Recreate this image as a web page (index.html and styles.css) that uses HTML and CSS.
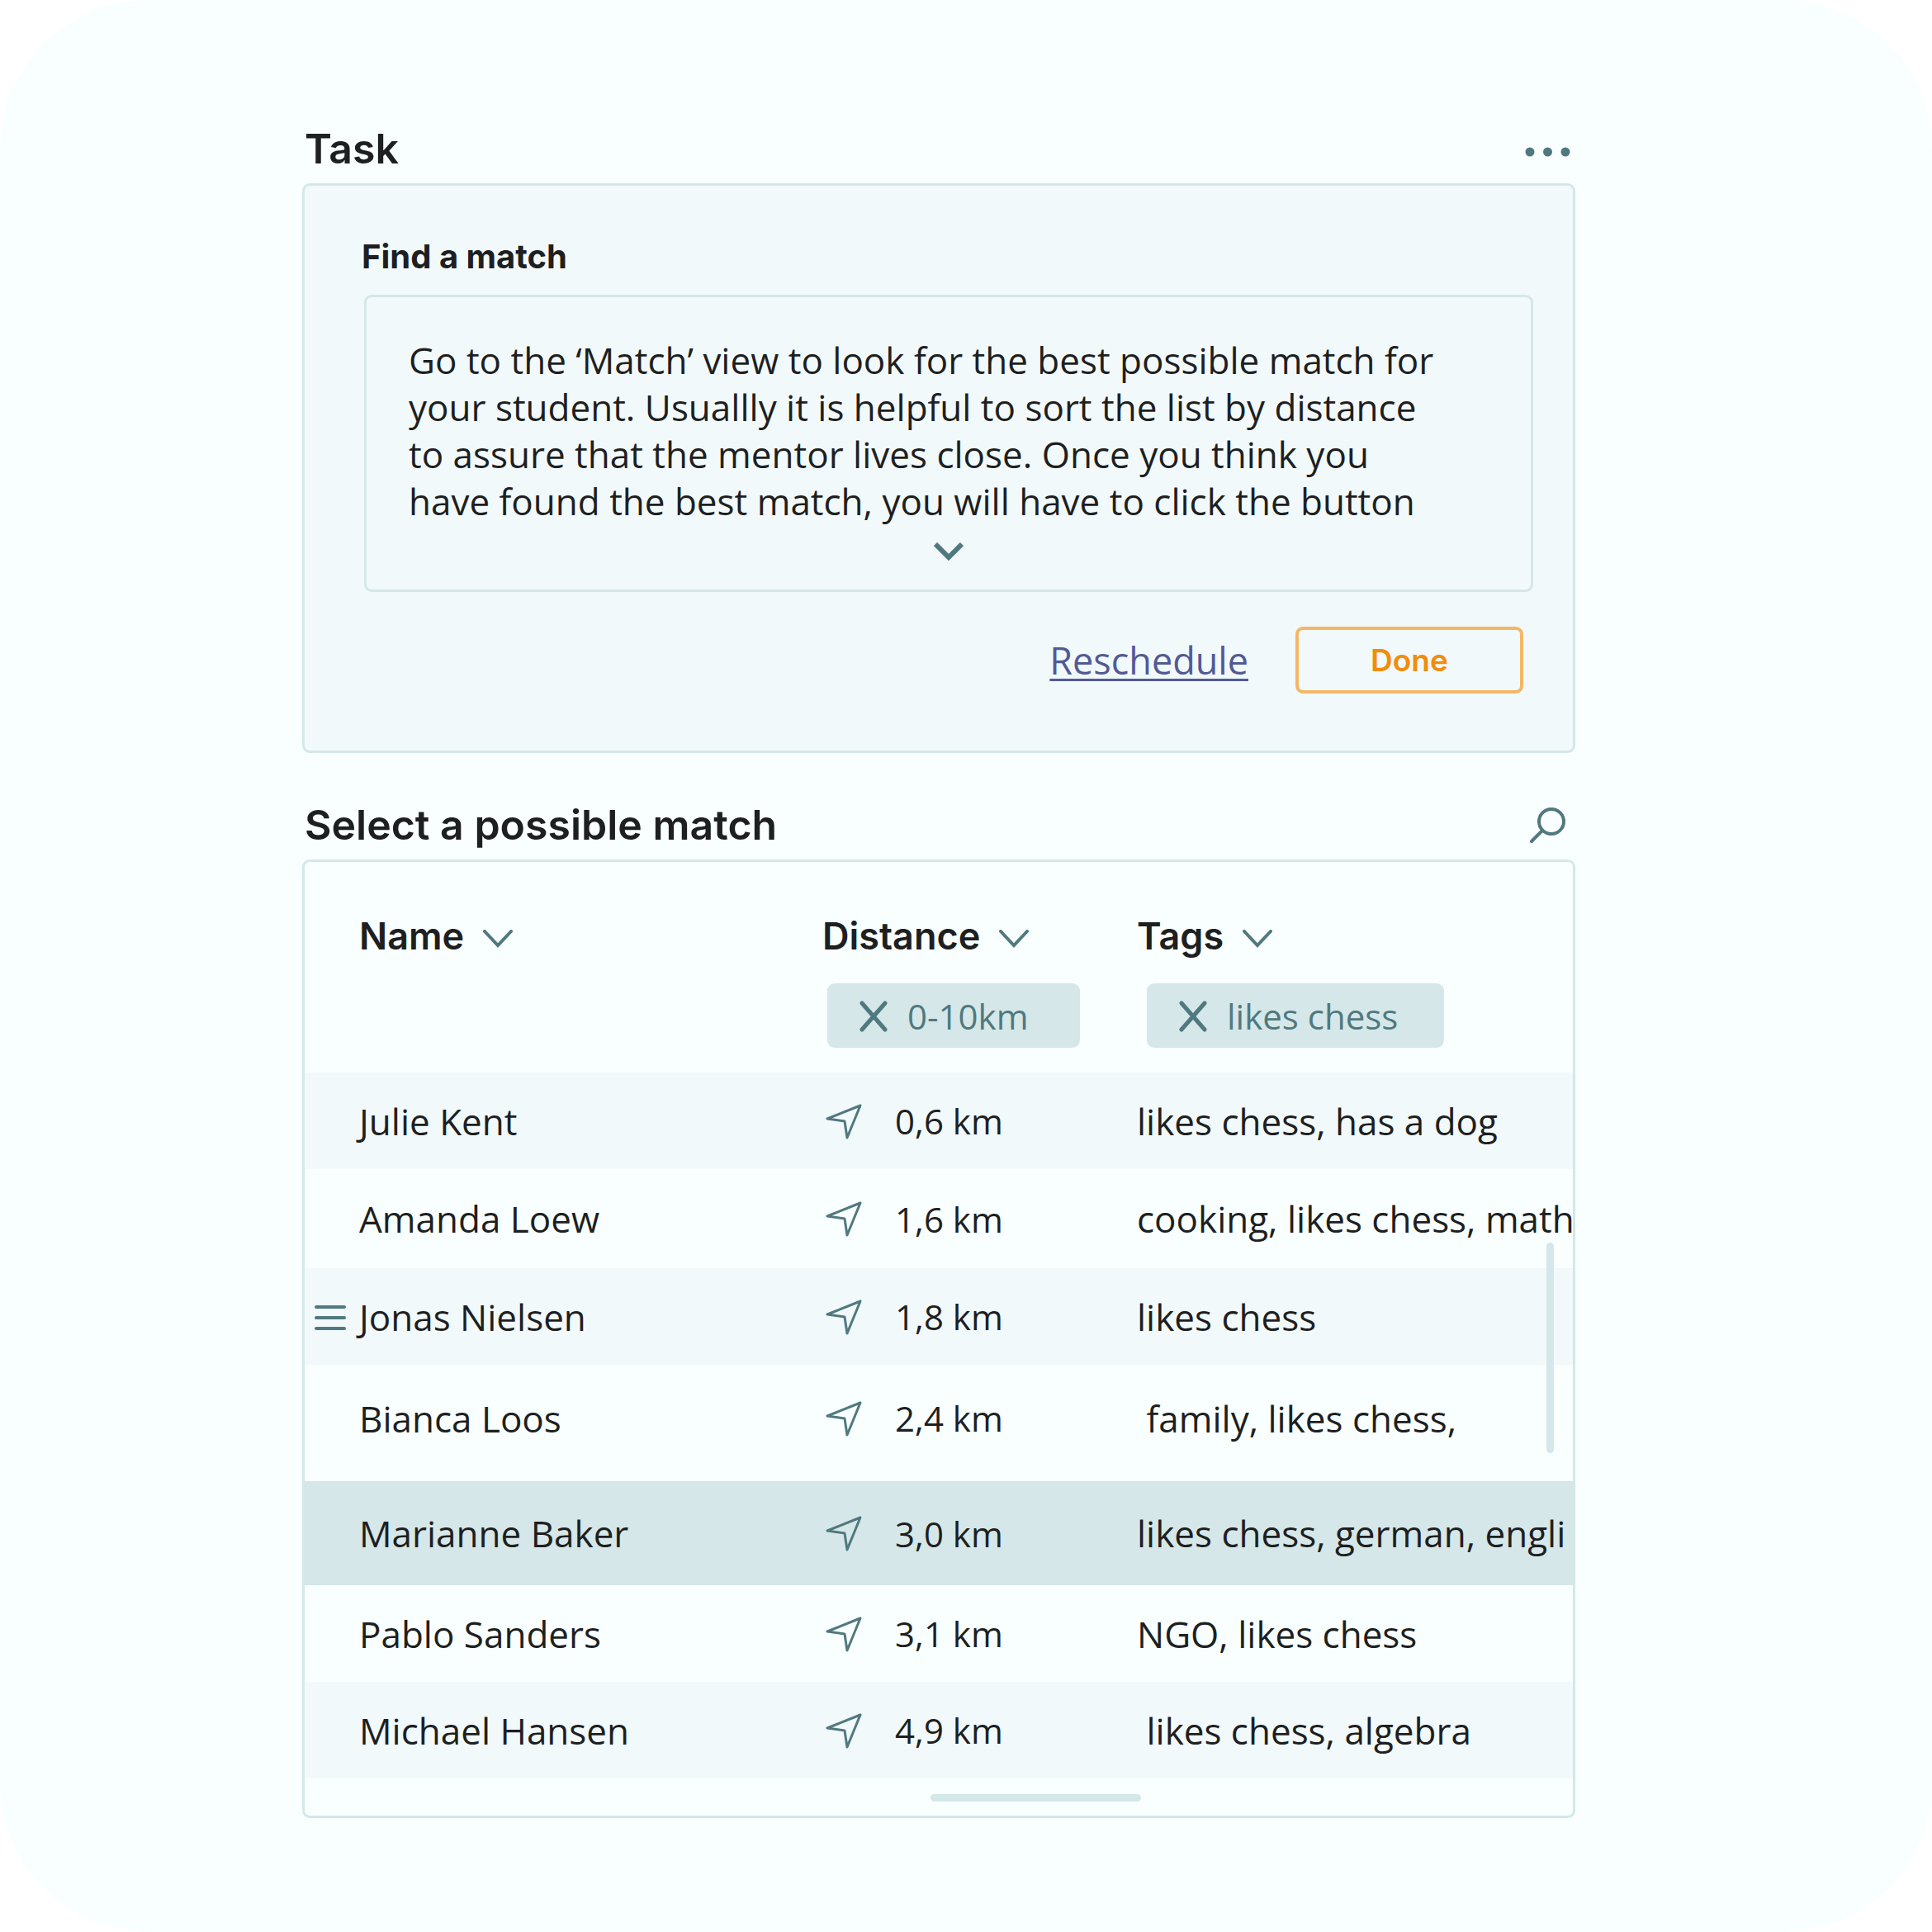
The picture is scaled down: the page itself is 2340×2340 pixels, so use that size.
FILE: index.html
```html
<!DOCTYPE html>
<html lang="en">
<head>
    <meta charset="UTF-8">
    <meta name="viewport" content="width=device-width, initial-scale=1.0">
    <title>Find a match</title>
    <link rel="stylesheet" href="styles.css">
</head>
<body>

<!-- shared icons -->
<svg class="sprite" aria-hidden="true">
    <symbol id="chevron" viewBox="0 0 36 22">
        <path d="M2 2 L18 19 L34 2" fill="none" stroke="currentColor" stroke-width="4" stroke-linecap="round"/>
    </symbol>
    <symbol id="cross" viewBox="0 0 34 40">
        <path d="M3 5 L31 37 M31 5 L3 37" fill="none" stroke="currentColor" stroke-width="5" stroke-linecap="round"/>
    </symbol>
    <symbol id="arrow" viewBox="0 0 44 44">
        <path d="M42 3 L2 19 L23 22 L26 42 Z" fill="none" stroke="currentColor" stroke-width="3" stroke-linejoin="round"/>
    </symbol>
</svg>

<main class="page">
    <section class="task">
        <div class="section-head">
            <h2>Task</h2>
            <button class="icon-btn" aria-label="More options">
                <svg width="56" height="20" viewBox="0 0 56 20" fill="currentColor">
                    <circle cx="7" cy="14" r="5.5"/>
                    <circle cx="28.500" cy="14" r="5.5"/>
                    <circle cx="50" cy="14" r="5.5"/>
                </svg>
            </button>
        </div>

        <div class="panel task-panel">
            <h3>Find a match</h3>
            <div class="description">
                <p>Go to the ‘Match’ view to look for the best possible match for<br>
                your student. Usuallly it is helpful to sort the list by distance<br>
                to assure that the mentor lives close. Once you think you<br>
                have found the best match, you will have to click the button</p>
                <button class="icon-btn expand" aria-label="Show more">
                    <svg width="36" height="22" viewBox="0 0 36 22">
                        <path d="M2 2 L18 18 L34 2" fill="none" stroke="currentColor" stroke-width="6"/>
                    </svg>
                </button>
            </div>
            <div class="actions">
                <a href="#">Reschedule</a>
                <button class="done-btn">Done</button>
            </div>
        </div>
    </section>

    <section class="matches">
        <div class="section-head">
            <h2>Select a possible match</h2>
            <button class="icon-btn" aria-label="Search">
                <svg width="50" height="46" viewBox="0 0 50 46" fill="none" stroke="currentColor" stroke-width="4" stroke-linecap="round">
                    <circle cx="27" cy="19" r="15"/>
                    <path d="M16 30 L3 43"/>
                </svg>
            </button>
        </div>

        <div class="panel match-panel">
            <table>
                <colgroup>
                    <col class="col-name">
                    <col class="col-distance">
                    <col>
                </colgroup>
                <thead>
                <tr>
                    <th>
                        <button class="sort-btn">Name <svg width="36" height="22"><use href="#chevron"/></svg></button>
                    </th>
                    <th>
                        <button class="sort-btn">Distance <svg width="36" height="22"><use href="#chevron"/></svg></button>
                        <button class="chip"><svg width="34" height="40"><use href="#cross"/></svg>0-10km</button>
                    </th>
                    <th>
                        <button class="sort-btn">Tags <svg width="36" height="22"><use href="#chevron"/></svg></button>
                        <button class="chip chip-tags"><svg width="34" height="40"><use href="#cross"/></svg>likes chess</button>
                    </th>
                </tr>
                </thead>
                <tbody>
                <tr class="shaded">
                    <td>Julie Kent</td>
                    <td><span class="distance"><svg width="44" height="44"><use href="#arrow"/></svg>0,6 km</span></td>
                    <td>likes chess, has a dog</td>
                </tr>
                <tr class="tall">
                    <td>Amanda Loew</td>
                    <td><span class="distance"><svg width="44" height="44"><use href="#arrow"/></svg>1,6 km</span></td>
                    <td>cooking, likes chess, math</td>
                </tr>
                <tr class="shaded">
                    <td>
                        <button class="icon-btn drag" aria-label="Row menu">
                            <svg width="38" height="30" viewBox="0 0 38 30" stroke="currentColor" stroke-width="4" stroke-linecap="round">
                                <path d="M2 2 H36 M2 15 H36 M2 28 H36"/>
                            </svg>
                        </button>
                        Jonas Nielsen
                    </td>
                    <td><span class="distance"><svg width="44" height="44"><use href="#arrow"/></svg>1,8 km</span></td>
                    <td>likes chess</td>
                </tr>
                <tr class="spaced">
                    <td>Bianca Loos</td>
                    <td><span class="distance"><svg width="44" height="44"><use href="#arrow"/></svg>2,4 km</span></td>
                    <td>&nbsp;family, likes chess,</td>
                </tr>
                <tr class="selected">
                    <td>Marianne Baker</td>
                    <td><span class="distance"><svg width="44" height="44"><use href="#arrow"/></svg>3,0 km</span></td>
                    <td>likes chess, german, engli</td>
                </tr>
                <tr>
                    <td>Pablo Sanders</td>
                    <td><span class="distance"><svg width="44" height="44"><use href="#arrow"/></svg>3,1 km</span></td>
                    <td>NGO, likes chess</td>
                </tr>
                <tr class="shaded">
                    <td>Michael Hansen</td>
                    <td><span class="distance"><svg width="44" height="44"><use href="#arrow"/></svg>4,9 km</span></td>
                    <td>&nbsp;likes chess, algebra</td>
                </tr>
                </tbody>
            </table>
            <div class="thumb thumb-y"></div>
            <div class="thumb thumb-x"></div>
        </div>
    </section>
</main>

</body>
</html>
```
FILE: styles.css
```css
* {
    box-sizing: border-box;
}
body {
    margin: 0;
    background-color: #fff;
    color: #1e1f21;
    font-family: "Open Sans", sans-serif;
    font-size: 44px;
}
h2, h3, p {
    margin: 0;
}
h2, h3, .sort-btn, .done-btn {
    font-family: Inter, sans-serif;
}
button {
    padding: 0;
    background: none;
    border: none;
    color: inherit;
    font: inherit;
    cursor: pointer;
}
svg {
    display: block;
    flex: none;
}
.sprite {
    position: absolute;
    width: 0;
    height: 0;
}
.page {
    min-height: 100vh;
    padding: 144px 432px 138px 366px;
    background-color: #f9ffff;
    border-radius: 180px;
}
.section-head {
    display: flex;
    justify-content: space-between;
    align-items: center;
    height: 78px;
    padding: 0 6px 6px 3px;
}
h2 {
    font-size: 50px;
    font-weight: 600;
    line-height: 60px;
}
.icon-btn {
    color: #50797f;
}
.panel {
    border: 3px solid #d5e7e8;
    border-radius: 9px;
}

/* task */
.task-panel {
    padding: 59px 48px 69px 72px;
    background-color: #f2f9fb;
}
h3 {
    margin-left: -3px;
    font-size: 40px;
    font-weight: 700;
    line-height: 54px;
}
.description {
    margin-top: 19px;
    padding: 48px 51px 35px;
    border: 3px solid #d5e7e8;
    border-radius: 9px;
}
.description p {
    line-height: 57px;
    white-space: nowrap;
}
.expand {
    display: block;
    margin: 21px auto 0;
}
.actions {
    display: flex;
    justify-content: flex-end;
    align-items: center;
    gap: 57px;
    margin-top: 42px;
    padding-right: 12px;
}
.actions a {
    color: #525a96;
    font-size: 45px;
    font-weight: 500;
    text-decoration-thickness: 3px;
    text-underline-offset: 5px;
}
.done-btn {
    width: 276px;
    height: 81px;
    border: 4px solid #f3b765;
    border-radius: 9px;
    color: #f28c0a;
    font-size: 37px;
    font-weight: 600;
}

/* matches */
.matches {
    margin-top: 51px;
}
.match-panel {
    position: relative;
    padding-bottom: 45px;
    overflow: hidden;
}
table {
    width: 100%;
    table-layout: fixed;
    border-collapse: collapse;
}
.col-name {
    width: 627px;
}
.col-distance {
    width: 381px;
}
th {
    height: 255px;
    padding: 63px 0 0;
    text-align: left;
    vertical-align: top;
}
td {
    position: relative;
    height: 117px;
    padding: 0;
    white-space: nowrap;
}
th:first-child, td:first-child {
    padding-left: 66px;
}
.sort-btn {
    display: flex;
    align-items: center;
    gap: 23px;
    font-size: 45px;
    font-weight: 600;
    line-height: 54px;
}
.sort-btn svg {
    margin-top: 6px;
}
.sort-btn svg, .distance svg {
    color: #50797f;
}
.chip {
    display: flex;
    align-items: center;
    gap: 24px;
    width: 306px;
    height: 78px;
    margin: 30px 0 0 6px;
    padding-left: 39px;
    background-color: #d5e7e8;
    border-radius: 9px;
    color: #50797f;
    font-size: 42px;
    font-weight: 500;
}
.chip-tags {
    width: 360px;
    margin-left: 12px;
}
.distance {
    display: flex;
    align-items: center;
    gap: 40px;
    padding-left: 4px;
    font-size: 42px;
}
.shaded {
    background-color: #f2f9fb;
}
.tall td {
    height: 120px;
}
.spaced td {
    height: 141px;
    padding-bottom: 12px;
}
.selected {
    background-color: #d5e7e8;
}
.selected td {
    height: 126px;
}
.drag {
    position: absolute;
    top: 45px;
    left: 12px;
}
.thumb {
    position: absolute;
    background-color: #d5e7e8;
    border-radius: 5px;
}
.thumb-y {
    top: 461px;
    right: 23px;
    width: 9px;
    height: 255px;
}
.thumb-x {
    bottom: 17px;
    left: 758px;
    width: 255px;
    height: 9px;
}
```
